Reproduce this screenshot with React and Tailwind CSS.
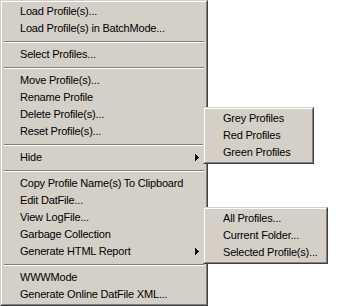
import React from 'react';

const mainItems = [
  { label: 'Load Profile(s)...' },
  { label: 'Load Profile(s) in BatchMode...' },
  { sep: true },
  { label: 'Select Profiles...' },
  { sep: true },
  { label: 'Move Profile(s)...' },
  { label: 'Rename Profile' },
  { label: 'Delete Profile(s)...' },
  { label: 'Reset Profile(s)...' },
  { sep: true },
  { label: 'Hide', sub: true },
  { sep: true },
  { label: 'Copy Profile Name(s) To Clipboard' },
  { label: 'Edit DatFile...' },
  { label: 'View LogFile...' },
  { label: 'Garbage Collection' },
  { label: 'Generate HTML Report', sub: true },
  { sep: true },
  { label: 'WWWMode' },
  { label: 'Generate Online DatFile XML...' },
];

const hideItems = [{ label: 'Grey Profiles' }, { label: 'Red Profiles' }, { label: 'Green Profiles' }];
const reportItems = [{ label: 'All Profiles...' }, { label: 'Current Folder...' }, { label: 'Selected Profile(s)...' }];

const Arrow = () => (
  <svg width="4" height="7" viewBox="0 0 4 7" shapeRendering="crispEdges" className="block">
    <rect x="0" y="0" width="1" height="7" fill="#000" />
    <rect x="1" y="1" width="1" height="5" fill="#000" />
    <rect x="2" y="2" width="1" height="3" fill="#000" />
    <rect x="3" y="3" width="1" height="1" fill="#000" />
  </svg>
);

const Menu = ({ items, className = '' }) => (
  <div className={`border border-t-[#d4d0c8] border-l-[#d4d0c8] border-r-[#404040] border-b-[#404040] bg-[#d4d0c8] ${className}`}>
    <div className="border border-t-white border-l-white border-r-[#808080] border-b-[#808080] p-px">
      {items.map((item, i) =>
        item.sep ? (
          <div key={i} className="h-[9px] pt-[4px] px-px">
            <div className="h-px bg-[#808080]" />
            <div className="h-px bg-white" />
          </div>
        ) : (
          <div key={i} className="h-[17px] flex items-center pl-[17px] pr-[6px] whitespace-nowrap">
            <span className="leading-[17px] tracking-[-0.2px]">{item.label}</span>
            {item.sub && (
              <span className="ml-auto">
                <Arrow />
              </span>
            )}
          </div>
        )
      )}
    </div>
  </div>
);

export default function App() {
  return (
    <div
      className="relative w-[345px] h-[306px] bg-white text-black text-[11px] overflow-hidden"
      style={{ fontFamily: '"Liberation Sans", Arial, sans-serif' }}
    >
      <Menu items={mainItems} className="w-[208px]" />
      <Menu items={hideItems} className="absolute left-[203px] top-[107px] w-[111px]" />
      <Menu items={reportItems} className="absolute left-[203px] top-[207px] w-[125px]" />
    </div>
  );
}
